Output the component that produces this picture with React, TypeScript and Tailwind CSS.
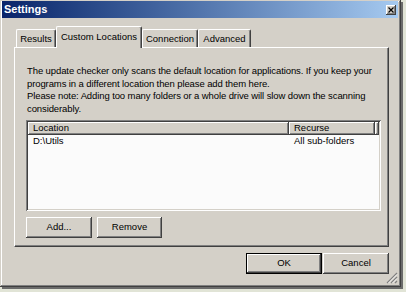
import React from "react";

const raised =
  "shadow-[inset_-1px_-1px_#404040,inset_1px_1px_#ffffff,inset_-2px_-2px_#808080,inset_2px_2px_#d4d0c8]";
const sunken =
  "shadow-[inset_1px_1px_#808080,inset_-1px_-1px_#ffffff,inset_2px_2px_#404040,inset_-2px_-2px_#d4d0c8]";

function Tab({ label, active, width }: { label: string; active?: boolean; width: string }) {
  if (active) {
    return (
      <div
        className={`${width} relative z-10 -mb-px h-[22px] bg-[#d4d0c8] border-l border-t border-white border-r border-r-[#404040] rounded-t-[2px] shadow-[inset_-1px_0_#808080] flex items-start justify-center pt-[3px]`}
      >
        {label}
      </div>
    );
  }
  return (
    <div
      className={`${width} h-[18px] border-l border-t border-white border-r border-r-[#404040] rounded-t-[2px] shadow-[inset_-1px_0_#808080] flex items-center justify-center pt-[1px]`}
    >
      {label}
    </div>
  );
}

function Button({ label, width, isDefault }: { label: string; width: string; isDefault?: boolean }) {
  if (isDefault) {
    return (
      <div className={`${width} h-[21px] border border-black bg-[#d4d0c8]`}>
        <div className={`h-full ${raised} flex items-center justify-center`}>{label}</div>
      </div>
    );
  }
  return (
    <div className={`${width} h-[21px] bg-[#d4d0c8] ${raised} flex items-center justify-center`}>
      {label}
    </div>
  );
}

export default function App() {
  const lines = [
    "The update checker only scans the default location for applications. If you keep your",
    "programs in a different location then please add them here.",
    "Please note: Adding too many folders or a whole drive will slow down the scanning",
    "considerably.",
  ];

  return (
    <div
      className="w-[406px] h-[292px] bg-[#e1e4d6] overflow-hidden text-[9.5px] text-black"
      style={{ fontFamily: '"Liberation Sans", Arial, sans-serif' }}
    >
      <div
        className={`relative w-[401px] h-[287px] bg-[#d4d0c8] flex flex-col pl-[2px] pr-[3px] pt-[1px] [box-shadow:inset_-1px_-1px_#404040,inset_1px_1px_#d4d0c8,inset_-2px_-2px_#808080,inset_2px_2px_#ffffff,2px_2px_0_#6b6b6b]`}
      >
        {/* title bar */}
        <div className="h-[17px] flex items-center justify-between bg-gradient-to-r from-[#0a246a] to-[#a6caf0] pl-[2px] pr-[2px]">
          <span className="text-white font-bold text-[11px] leading-none">Settings</span>
          <div className={`w-[10px] h-[10px] bg-[#d4d0c8] ${raised} flex items-center justify-center`}>
            <svg width="6" height="6" viewBox="0 0 6 6">
              <path d="M0.5 0.5 L5.5 5.5 M5.5 0.5 L0.5 5.5" stroke="#000" strokeWidth="1.2" />
            </svg>
          </div>
        </div>

        {/* tabs */}
        <div className="ml-[12px] mt-[7px] flex flex-col w-[375px]">
          <div className="flex items-end h-[22px] pl-[2px]">
            <Tab label="Results" width="w-[40px]" />
            <Tab label="Custom Locations" width="w-[86px]" active />
            <Tab label="Connection" width="w-[56px]" />
            <Tab label="Advanced" width="w-[53px]" />
          </div>

          {/* panel */}
          <div className="h-[200px] border-l border-t border-white border-r border-b border-r-[#404040] border-b-[#404040] shadow-[inset_-1px_-1px_#808080] pl-[11px] pt-[17px]">
            <div className="pl-[1px] leading-[12.7px] tracking-[-0.1px]">
              {lines.map((l) => (
                <div key={l} className="whitespace-nowrap">
                  {l}
                </div>
              ))}
            </div>

            {/* list view */}
            <div className={`mt-[4px] w-[355px] h-[91px] bg-[#fbfbfb] ${sunken} p-[2px]`}>
              <div className="flex h-[13px]">
                <div className={`w-[261px] bg-[#d4d0c8] ${raised} pl-[5px] flex items-center`}>Location</div>
                <div className={`w-[86px] bg-[#d4d0c8] ${raised} pl-[5px] flex items-center`}>Recurse</div>
                <div className={`flex-1 bg-[#d4d0c8] ${raised}`} />
              </div>
              <div className="flex h-[13px] items-center">
                <div className="w-[261px] pl-[5px]">D:\Utils</div>
                <div className="pl-[5px]">All sub-folders</div>
              </div>
            </div>

            {/* list buttons */}
            <div className="mt-[6px] flex gap-[5px]">
              <Button label="Add..." width="w-[66px]" />
              <Button label="Remove" width="w-[65px]" />
            </div>
          </div>

          {/* dialog buttons */}
          <div className="mt-[6px] flex justify-end gap-[1px]">
            <Button label="OK" width="w-[76px]" isDefault />
            <Button label="Cancel" width="w-[66px]" />
          </div>
        </div>

        {/* size grip */}
        <svg className="absolute right-[3px] bottom-[3px]" width="12" height="12" viewBox="0 0 12 12">
          <path d="M11 1 L1 11 M11 5 L5 11 M11 9 L9 11" stroke="#808080" strokeWidth="1.2" />
          <path d="M11 2.5 L2.5 11 M11 6.5 L6.5 11" stroke="#ffffff" strokeWidth="0.8" />
        </svg>
      </div>
    </div>
  );
}
